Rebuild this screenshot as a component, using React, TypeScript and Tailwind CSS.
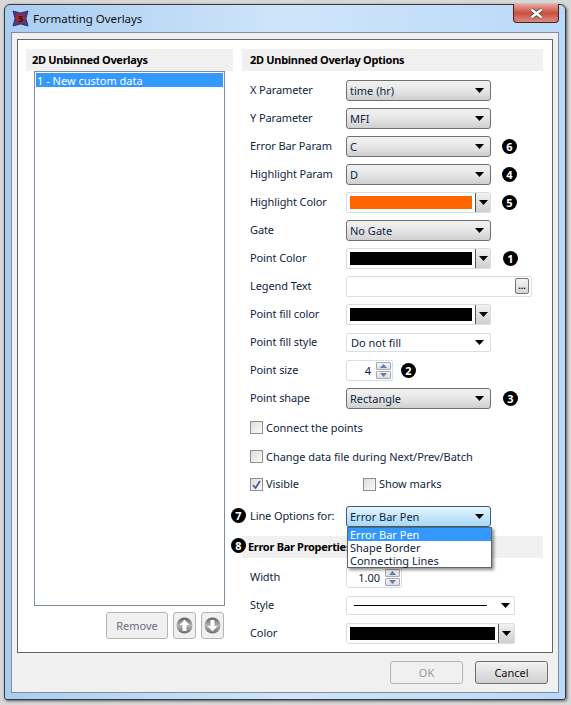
import React from "react";

const Arrow = ({ className = "" }: { className?: string }) => (
  <svg width="9" height="5" viewBox="0 0 9 5" className={className}>
    <path d="M0 0H9L4.5 5Z" fill="#000" />
  </svg>
);

const Badge = ({ n }: { n: number }) => (
  <span className="flex h-[15px] w-[15px] items-center justify-center rounded-full bg-black text-[11px] leading-none font-bold text-white">
    {n}
  </span>
);

const Row = ({ label, children, h = "h-[28px]" }: { label: string; children: React.ReactNode; h?: string }) => (
  <div className={`flex ${h} items-center`}>
    <span className="w-[104px] shrink-0 pb-[2px] pl-[8px] tracking-[-0.1px] whitespace-nowrap text-[#10253f]">{label}</span>
    {children}
  </div>
);

const Select = ({ value, focus = false }: { value: string; focus?: boolean }) => (
  <div
    className={`flex h-[21px] w-[145px] items-center justify-between rounded-[3px] border pr-[6px] pl-[3px] ${
      focus
        ? "border-[#2c628b] bg-gradient-to-b from-[#e5f4fc] to-[#a7d9f5]"
        : "border-[#707070] bg-gradient-to-b from-[#f2f2f2] via-[#e6e6e6] to-[#cfcfcf]"
    }`}
  >
    <span className="text-[#10253f]">{value}</span>
    <Arrow />
  </div>
);

const Color = ({ color, w = "w-[145px]", bar = "w-[122px]" }: { color: string; w?: string; bar?: string }) => (
  <div className={`flex h-[21px] ${w} items-center rounded-[2px] border border-[#d5dfe8] bg-white pl-[3px]`}>
    <div className={`h-[13px] ${bar}`} style={{ backgroundColor: color }} />
    <div className="ml-[3px] flex h-full flex-1 items-center justify-center border-l border-[#555] bg-gradient-to-b from-[#f2f2f2] to-[#cfcfcf]">
      <Arrow />
    </div>
  </div>
);

const Spin = ({ value, w }: { value: string; w: string }) => (
  <div className={`flex h-[21px] ${w} items-center justify-end rounded-[2px] border border-[#d5dfe8] bg-white pr-[1px]`}>
    <span className="mr-[5px] text-[#10253f]">{value}</span>
    <div className="flex w-[15px] flex-col gap-[1px]">
      {["M0 4L3.5 0L7 4Z", "M0 0H7L3.5 4Z"].map((d) => (
        <div key={d} className="flex h-[8px] items-center justify-center rounded-[1px] border border-[#a9a9b5] bg-gradient-to-b from-[#f5f5f5] to-[#dcdcdc]">
          <svg width="7" height="4" viewBox="0 0 7 4">
            <path d={d} fill="#5e7fb0" />
          </svg>
        </div>
      ))}
    </div>
  </div>
);

const Check = ({ label, checked = false }: { label: string; checked?: boolean }) => (
  <div className="flex items-center gap-[3px]">
    <span className="flex h-[13px] w-[13px] items-center justify-center border border-[#8e8f8f] bg-gradient-to-br from-[#dcdcdc] to-[#fbfbfb]">
      {checked && (
        <svg width="9" height="9" viewBox="0 0 9 9">
          <path d="M1 5L3.5 8L8 1" fill="none" stroke="#4a5f97" strokeWidth="1.8" />
        </svg>
      )}
    </span>
    <span className="pb-[1px] tracking-[-0.05px] whitespace-nowrap text-[#10253f]">{label}</span>
  </div>
);

const RoundArrow = ({ up }: { up: boolean }) => (
  <div className="flex h-[27px] w-[23px] items-center justify-center rounded-[3px] border border-[#b5b5b5] bg-[#f0f0f0]">
    <svg width="17" height="17" viewBox="0 0 17 17">
      <defs>
        <linearGradient id={up ? "gu" : "gd"} x1="0" y1="0" x2="0" y2="1">
          <stop offset="0" stopColor="#5f5f5f" />
          <stop offset="0.5" stopColor="#b5b5b5" />
          <stop offset="1" stopColor="#6a6a6a" />
        </linearGradient>
      </defs>
      <circle cx="8.5" cy="8.5" r="8" fill={`url(#${up ? "gu" : "gd"})`} />
      <path
        d={up ? "M8.5 2.5L13.5 8H10.5V14H6.5V8H3.5Z" : "M8.5 14.5L13.5 9H10.5V3H6.5V9H3.5Z"}
        fill="#fff"
      />
    </svg>
  </div>
);

const Header = ({ children, className = "" }: { children: React.ReactNode; className?: string }) => (
  <div className={`flex h-[22px] items-center bg-[#f0f0f0] pb-[1px] font-bold tracking-[-0.3px] whitespace-nowrap text-black ${className}`}>{children}</div>
);

export default function App() {
  return (
    <div className="h-[705px] w-[571px] overflow-hidden bg-[#d8d8d8] pt-[4px] pr-[5px] pb-[5px] pl-[4px] font-['Noto_Sans',sans-serif] text-[11px] leading-[13px]">
      <div className="relative flex h-[696px] flex-col rounded-t-[6px] rounded-b-[3px] border border-[#3a3a3a] bg-gradient-to-r from-[#a9cdf0] via-[#cfe5fb] to-[#b9d9f8] shadow-[1px_1px_3px_#555]">
        <div className="flex h-[27px] shrink-0 items-center pl-[7px]">
          <svg width="17" height="17" viewBox="0 0 17 17">
            <path d="M1 1L8.5 3L16 1L14 8.5L16 16L8.5 14L1 16L3 8.5Z" fill="#4b3a8c" stroke="#2a2060" strokeWidth="0.8" />
            <circle cx="8.5" cy="8.5" r="4.6" fill="#b3261e" />
            <text x="8.5" y="11.5" textAnchor="middle" fontSize="9" fontWeight="700" fill="#1c1030">5</text>
          </svg>
          <span className="ml-[4px] pb-[1px] text-[11.5px] tracking-[-0.05px] text-[#111]">Formatting Overlays</span>
        </div>
        <div className="absolute top-[-1px] right-[6px] flex h-[19px] w-[46px] items-center justify-center rounded-b-[4px] border border-t-0 border-[#4a1f1c] bg-gradient-to-b from-[#e8a59d] via-[#c9503f] to-[#d98a80]">
          <svg width="13" height="11" viewBox="0 0 13 11">
            <path d="M1.5 1.5L11.5 9.5M11.5 1.5L1.5 9.5" stroke="#3f3f3f" strokeWidth="4" />
            <path d="M1.5 1.5L11.5 9.5M11.5 1.5L1.5 9.5" stroke="#fff" strokeWidth="2.6" />
          </svg>
        </div>

        <div className="mx-[6px] mb-[6px] flex flex-1 flex-col border border-[#7f8e9e] bg-[#f0f0f0] px-[5px] pt-[6px]">
          <div className="flex h-[614px] border border-[#666] bg-white pt-[9px] pl-[8px]">
            <div className="flex w-[207px] flex-col">
              <Header className="pl-[6px]">2D Unbinned Overlays</Header>
              <div className="ml-[8px] h-[535px] w-[191px] border border-[#7f8e9e] bg-white p-[1px]">
                <div className="flex h-[14px] items-center bg-[#3399ff] pl-[1px] text-white">1 - New custom data</div>
              </div>
              <div className="mt-[6px] flex justify-end gap-[5px] pr-[9px]">
                <div className="flex h-[27px] w-[62px] items-center justify-center rounded-[3px] border border-[#b5b5b5] bg-[#f0f0f0] text-[#6d6d80]">
                  Remove
                </div>
                <RoundArrow up />
                <RoundArrow up={false} />
              </div>
            </div>

            <div className="relative ml-[9px] flex w-[301px] flex-col">
              <Header className="pl-[8px]">2D Unbinned Overlay Options</Header>
              <div className="mt-[5px]">
                <Row label="X Parameter"><Select value="time (hr)" /></Row>
                <Row label="Y Parameter"><Select value="MFI" /></Row>
                <Row label="Error Bar Param">
                  <Select value="C" />
                  <span className="ml-[11px]"><Badge n={6} /></span>
                </Row>
                <Row label="Highlight Param">
                  <Select value="D" />
                  <span className="ml-[11px]"><Badge n={4} /></span>
                </Row>
                <Row label="Highlight Color">
                  <Color color="#ff6600" />
                  <span className="ml-[11px]"><Badge n={5} /></span>
                </Row>
                <Row label="Gate"><Select value="No Gate" /></Row>
                <Row label="Point Color">
                  <Color color="#000000" />
                  <span className="ml-[12px]"><Badge n={1} /></span>
                </Row>
                <Row label="Legend Text">
                  <div className="flex h-[21px] w-[186px] items-center justify-end rounded-[2px] border border-[#d5dfe8] bg-white pr-[2px]">
                    <div className="flex h-[16px] w-[14px] items-center justify-center rounded-[2px] border border-[#777] bg-gradient-to-b from-[#f5f5f5] to-[#d5d5d5] pb-[1px] text-[9px] font-bold">
                      ...
                    </div>
                  </div>
                </Row>
                <Row label="Point fill color"><Color color="#000000" /></Row>
                <Row label="Point fill style">
                  <div className="flex h-[19px] w-[145px] items-center justify-between rounded-[2px] border border-[#d5dfe8] bg-white pr-[6px] pl-[4px]">
                    <span className="text-[#10253f]">Do not fill</span>
                    <Arrow />
                  </div>
                </Row>
                <Row label="Point size">
                  <Spin value="4" w="w-[47px]" />
                  <span className="ml-[8px]"><Badge n={2} /></span>
                </Row>
                <Row label="Point shape">
                  <Select value="Rectangle" />
                  <span className="ml-[12px]"><Badge n={3} /></span>
                </Row>
                <div className="flex h-[31px] items-center pl-[8px]"><Check label="Connect the points" /></div>
                <div className="flex h-[27px] items-center pl-[8px]"><Check label="Change data file during Next/Prev/Batch" /></div>
                <div className="flex h-[28px] items-center pl-[8px]">
                  <div className="w-[113px]"><Check label="Visible" checked /></div>
                  <Check label="Show marks" />
                </div>
                <Row label="Line Options for:" h="h-[28px] mt-[4px]"><Select value="Error Bar Pen" focus /></Row>
                <Header className="mt-[6px] pl-[6px]">Error Bar Properties</Header>
                <div className="mt-[5px]">
                  <Row label="Width"><Spin value="1.00" w="w-[56px]" /></Row>
                  <Row label="Style">
                    <div className="flex h-[19px] w-[169px] items-center justify-between rounded-[2px] border border-[#d5dfe8] bg-white pr-[4px] pl-[7px]">
                      <div className="h-[1px] w-[133px] bg-black" />
                      <Arrow />
                    </div>
                  </Row>
                  <Row label="Color"><Color color="#000000" w="w-[169px]" bar="w-[145px]" /></Row>
                </div>
              </div>

              <span className="absolute top-[459px] left-[-11px]"><Badge n={7} /></span>
              <span className="absolute top-[489px] left-[-11px]"><Badge n={8} /></span>
              <div className="absolute top-[478px] left-[105px] w-[145px] border border-[#646464] bg-white text-[#10253f] shadow-[2px_2px_3px_rgba(0,0,0,0.45)]">
                <div className="h-[13px] bg-[#3399ff] pl-[2px] text-white">Error Bar Pen</div>
                <div className="h-[13px] pl-[2px]">Shape Border</div>
                <div className="h-[13px] pl-[2px]">Connecting Lines</div>
              </div>
            </div>
          </div>
          <div className="flex flex-1 items-center justify-end gap-[12px] pr-[5px]">
            <div className="flex h-[23px] w-[73px] items-center justify-center rounded-[3px] border border-[#b5b5b5] bg-[#f0f0f0] text-[#9a9a9a]">OK</div>
            <div className="flex h-[23px] w-[73px] items-center justify-center rounded-[3px] border border-[#707070] bg-gradient-to-b from-[#f2f2f2] to-[#d0d0d0] text-[#111]">Cancel</div>
          </div>
        </div>
      </div>
    </div>
  );
}
